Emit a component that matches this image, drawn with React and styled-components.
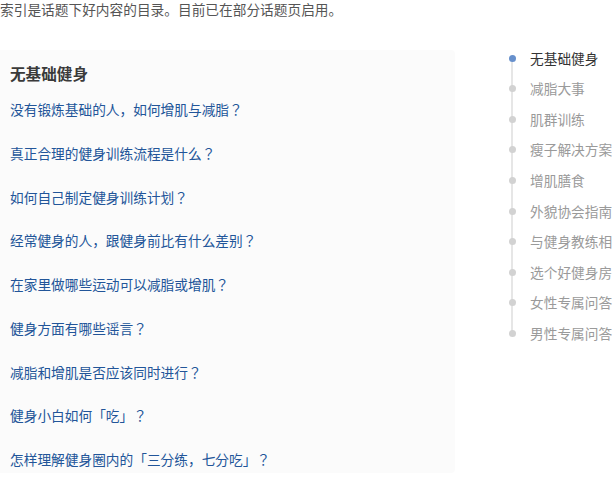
import React from 'react';
import styled, { createGlobalStyle } from 'styled-components';

const GlobalStyle = createGlobalStyle`
  html, body {
    margin: 0;
    padding: 0;
    background: #fff;
    overflow: hidden;
  }
  body {
    font-family: "Noto Sans CJK SC", "Liberation Sans", sans-serif;
  }
`;

const Page = styled.div`
  display: flex;
  align-items: flex-start;
  width: 612px;
  height: 486px;
  overflow: hidden;
`;

const Main = styled.div`
  width: 455px;
  flex-shrink: 0;
`;

const Intro = styled.p`
  margin: 0;
  font-size: 13.7px;
  line-height: 18px;
  color: #555;
  white-space: nowrap;
`;

const Panel = styled.section`
  margin-top: 32px;
  height: 423px;
  box-sizing: border-box;
  padding: 12px 10px 4px;
  background: #fbfbfb;
  border-radius: 0 4px 4px 0;
`;

const Heading = styled.h3`
  margin: 0;
  font-size: 15.6px;
  line-height: 22px;
  font-weight: bold;
  color: #3a3a3a;
`;

const Questions = styled.ul`
  list-style: none;
  margin: 0;
  padding: 15px 0 0;
  display: flex;
  flex-direction: column;
  gap: 23.75px;
  font-family: "Noto Sans CJK JP", "Noto Sans CJK SC", sans-serif;
`;

const Question = styled.li`
  font-size: 13.7px;
  line-height: 20px;
  color: #225599;
  white-space: nowrap;
`;

const Aside = styled.nav`
  margin-left: 50px;
  padding-top: 42.7px;
  flex-shrink: 0;
`;

const Steps = styled.ul`
  position: relative;
  list-style: none;
  margin: 0;
  padding: 0;

  &::before {
    content: '';
    position: absolute;
    left: 6px;
    top: 15px;
    bottom: 15px;
    width: 2px;
    background: #e6e6e6;
  }
`;

const Step = styled.li`
  position: relative;
  padding-left: 25px;
  height: 30.6px;
  line-height: 30.6px;
  font-size: 13.7px;
  white-space: nowrap;
  color: ${p => (p.active ? '#333' : '#9a9a9a')};

  &::before {
    content: '';
    position: absolute;
    left: 3.5px;
    top: 12px;
    width: 7px;
    height: 7px;
    border-radius: 50%;
    background: ${p => (p.active ? '#6790cc' : '#d2d2d2')};
  }
`;

const questions = [
  '没有锻炼基础的人，如何增肌与减脂？',
  '真正合理的健身训练流程是什么？',
  '如何自己制定健身训练计划？',
  '经常健身的人，跟健身前比有什么差别？',
  '在家里做哪些运动可以减脂或增肌？',
  '健身方面有哪些谣言？',
  '减脂和增肌是否应该同时进行？',
  '健身小白如何「吃」？',
  '怎样理解健身圈内的「三分练，七分吃」？',
];

const steps = [
  '无基础健身',
  '减脂大事',
  '肌群训练',
  '瘦子解决方案',
  '增肌膳食',
  '外貌协会指南',
  '与健身教练相处',
  '选个好健身房',
  '女性专属问答',
  '男性专属问答',
];

const App = () => (
  <>
    <GlobalStyle />
    <Page>
      <Main>
        <Intro>索引是话题下好内容的目录。目前已在部分话题页启用。</Intro>
        <Panel>
          <Heading>无基础健身</Heading>
          <Questions>
            {questions.map((q, i) => (
              <Question key={i}>{q}</Question>
            ))}
          </Questions>
        </Panel>
      </Main>
      <Aside>
        <Steps>
          {steps.map((s, i) => (
            <Step key={i} active={i === 0}>{s}</Step>
          ))}
        </Steps>
      </Aside>
    </Page>
  </>
);

export default App;
